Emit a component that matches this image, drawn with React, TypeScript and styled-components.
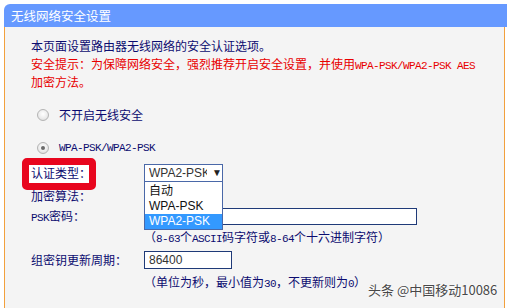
import React from "react";
import styled, { createGlobalStyle } from "styled-components";

const GlobalStyle = createGlobalStyle`
  html, body { margin: 0; padding: 0; background: #fff; }
  body { font-family: "Liberation Sans", "Noto Sans CJK SC", sans-serif; }
`;

const CJK = `"Noto Sans CJK SC", "Liberation Sans", sans-serif`;

const Page = styled.div`
  position: relative;
  width: 510px;
  height: 308px;
  overflow: hidden;
  padding: 4px 0 0 4px;
  box-sizing: border-box;
`;

const Panel = styled.div`
  width: 503px;
  display: flex;
  flex-direction: column;
`;

const Header = styled.div`
  height: 23px;
  background: #6699ff;
  border-top-left-radius: 6px;
  color: #fff;
  font-family: ${CJK};
  font-size: 12.5px;
  line-height: 23px;
  padding-left: 7px;
`;

const Body = styled.div`
  width: 501px;
  height: 281px;
  box-sizing: border-box;
  background: #f4f4f4;
  border-left: 1px solid #f2a03c;
  border-right: 1px solid #f2a03c;
  padding: 10px 0 0 26px;
  display: flex;
  flex-direction: column;
  font-family: ${CJK};
  font-size: 12px;
  line-height: 18px;
  color: #0c0c70;
`;

const Para = styled.div<{ $red?: boolean }>`
  color: ${(p) => (p.$red ? "#e80000" : "#0c0c70")};
  height: 18px;
  white-space: nowrap;
`;

const Mono = styled.span`
  font-family: "Liberation Mono", monospace;
  font-size: 11px;
  letter-spacing: -0.6px;
`;

const RadioRow = styled.div<{ $mt: number }>`
  display: flex;
  align-items: center;
  height: 18px;
  margin-top: ${(p) => p.$mt}px;
  padding-left: 6px;
  gap: 10px;
`;

const Radio = styled.span<{ $checked?: boolean }>`
  position: relative;
  width: 12px;
  height: 12px;
  box-sizing: border-box;
  border-radius: 50%;
  border: 1px solid #b4b4b4;
  background: radial-gradient(circle at 50% 40%, #ffffff 0%, #ececec 55%, #d4d4d4 100%);
  &::after {
    content: "";
    display: ${(p) => (p.$checked ? "block" : "none")};
    position: absolute;
    left: 3px;
    top: 3px;
    width: 4px;
    height: 4px;
    border-radius: 50%;
    background: #6a6a6a;
  }
`;

const Row = styled.div<{ $mt: number; $h?: number }>`
  display: flex;
  align-items: center;
  height: ${(p) => p.$h ?? 18}px;
  margin-top: ${(p) => p.$mt}px;
  white-space: nowrap;
`;

const Label = styled.div<{ $marked?: boolean }>`
  position: relative;
  z-index: 0;
  width: 113px;
  flex: none;
  &::before {
    content: "";
    display: ${(p) => (p.$marked ? "block" : "none")};
    position: absolute;
    z-index: -1;
    left: -9px;
    top: -6px;
    width: 74px;
    height: 32px;
    box-sizing: border-box;
    border: 7px solid #e8061e;
    border-radius: 5px;
    background: #fff;
  }
`;

const Hint = styled.div<{ $mt: number }>`
  margin-top: ${(p) => p.$mt}px;
  padding-left: 113px;
  height: 18px;
  white-space: nowrap;
`;

const SelectWrap = styled.div`
  position: relative;
  width: 79px;
  height: 18px;
`;

const SelectBox = styled.div`
  width: 79px;
  height: 18px;
  box-sizing: border-box;
  border: 1px solid #4a68a8;
  background: #fff;
  display: flex;
  align-items: center;
  font-family: "Liberation Sans", sans-serif;
  font-size: 12px;
  color: #333;
  padding-left: 4px;
  overflow: hidden;
`;

const SelectText = styled.span`
  width: 58px;
  overflow: hidden;
  flex: none;
`;

const Arrow = styled.span`
  font-size: 10px;
  color: #222;
  margin-left: 5px;
`;

const Dropdown = styled.div`
  position: absolute;
  z-index: 2;
  left: 0;
  top: 18px;
  width: 79px;
  box-sizing: border-box;
  background: #fff;
  border: 1px solid #4a68a8;
  border-top: none;
  padding-top: 2px;
  display: flex;
  flex-direction: column;
`;

const Option = styled.div<{ $selected?: boolean }>`
  height: 15px;
  line-height: 15px;
  padding-left: 4px;
  font-family: "Liberation Sans", "Noto Sans CJK SC", sans-serif;
  font-size: 12px;
  color: ${(p) => (p.$selected ? "#fff" : "#111")};
  background: ${(p) => (p.$selected ? "#3399ff" : "transparent")};
`;

const Input = styled.div<{ $w: number; $h: number }>`
  width: ${(p) => p.$w}px;
  height: ${(p) => p.$h}px;
  box-sizing: border-box;
  border: 1px solid #1f3a78;
  background: #fff;
  font-family: "Liberation Sans", sans-serif;
  font-size: 12px;
  color: #333;
  line-height: ${(p) => p.$h - 2}px;
  padding-left: 4px;
`;

const Watermark = styled.div`
  position: absolute;
  left: 368px;
  top: 281px;
  font-family: ${CJK};
  font-size: 13px;
  line-height: 18px;
  color: #484848;
  text-shadow: 0 0 2px #fff, 0 0 2px #fff;
  white-space: nowrap;
`;

export default function App() {
  return (
    <Page>
      <GlobalStyle />
      <Panel>
        <Header>无线网络安全设置</Header>
        <Body>
          <Para>本页面设置路由器无线网络的安全认证选项。</Para>
          <Para $red>
            安全提示：为保障网络安全，强烈推荐开启安全设置，并使用<Mono>WPA-PSK/WPA2-PSK AES</Mono>
          </Para>
          <Para $red>加密方法。</Para>

          <RadioRow $mt={15}>
            <Radio />
            <span>不开启无线安全</span>
          </RadioRow>
          <RadioRow $mt={15}>
            <Radio $checked />
            <Mono>WPA-PSK/WPA2-PSK</Mono>
          </RadioRow>

          <Row $mt={7}>
            <Label $marked>认证类型：</Label>
            <SelectWrap>
              <SelectBox>
                <SelectText>WPA2-PSK</SelectText>
                <Arrow>▼</Arrow>
              </SelectBox>
              <Dropdown>
                <Option>自动</Option>
                <Option>WPA-PSK</Option>
                <Option $selected>WPA2-PSK</Option>
              </Dropdown>
            </SelectWrap>
          </Row>
          <Row $mt={5}>
            <Label>加密算法：</Label>
          </Row>
          <Row $mt={3} $h={17}>
            <Label>
              <Mono>PSK</Mono>密码：
            </Label>
            <Input $w={273} $h={17} />
          </Row>
          <Hint $mt={3}>
            （<Mono>8-63</Mono>个<Mono>ASCII</Mono>码字符或<Mono>8-64</Mono>个十六进制字符）
          </Hint>
          <Row $mt={5}>
            <Label>组密钥更新周期：</Label>
            <Input $w={88} $h={18}>86400</Input>
          </Row>
          <Hint $mt={4}>
            （单位为秒，最小值为<Mono>30</Mono>，不更新则为<Mono>0</Mono>）
          </Hint>
        </Body>
      </Panel>
      <Watermark>头条 @中国移动10086</Watermark>
    </Page>
  );
}
